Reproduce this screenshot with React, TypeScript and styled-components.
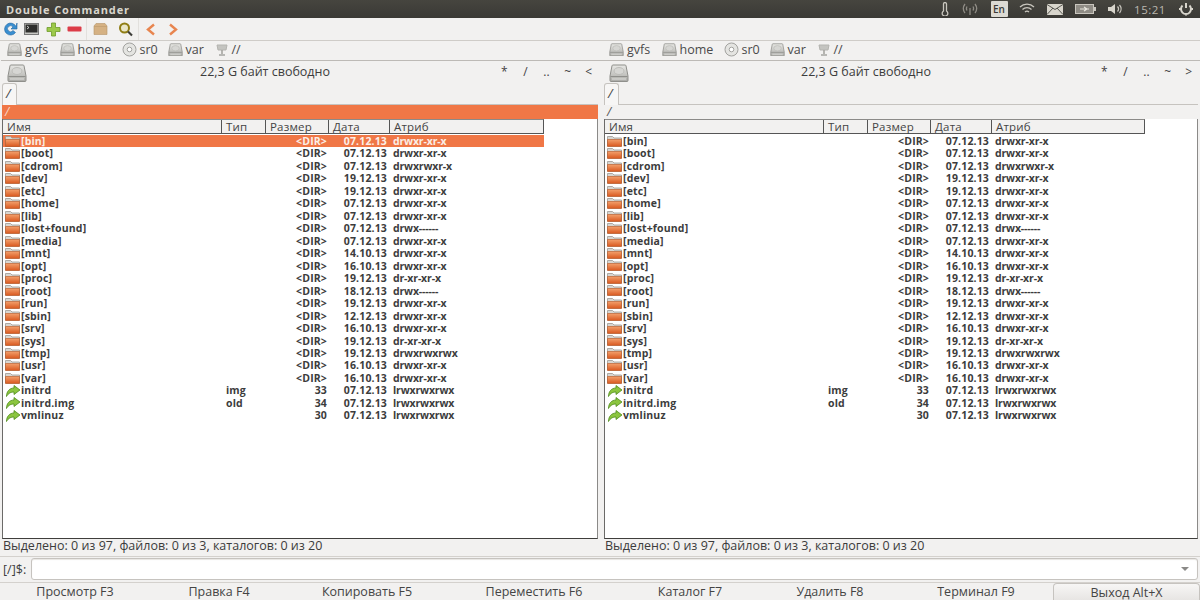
import React from "react";
import styled, { createGlobalStyle } from "styled-components";

const Global = createGlobalStyle`
  html, body { margin: 0; padding: 0; width: 1200px; height: 600px; overflow: hidden; background: #f2f1f0; }
  * { box-sizing: border-box; }
  #root { width: 1200px; height: 600px; }
`;

const Page = styled.div`
  width: 1200px; height: 600px; display: flex; flex-direction: column;
  font-family: "Open Sans", "Noto Sans", "Liberation Sans", sans-serif;
  font-size: 11.5px; color: #3c3c3c; background: #f2f1f0; overflow: hidden;
`;
const TitleBar = styled.div`
  height: 18px; flex: none; display: flex; align-items: center; justify-content: space-between;
  background: linear-gradient(#46453f, #3a3935); padding: 0 4px 0 6px;
`;
const TitleText = styled.div`
  color: #d9d6cd; font-weight: 700; font-size: 11px; letter-spacing: 0.9px;
`;
const Tray = styled.div`
  display: flex; align-items: center; height: 18px; color: #cfccc4;
`;
const TraySlot = styled.span<{ $w: number }>`
  width: ${p => p.$w}px; display: flex; justify-content: center; align-items: center;
`;
const Lang = styled.span`
  width: 17px; height: 16px; background: #dcdad3; color: #3c3b37; font-size: 10px; font-weight: 600;
  display: flex; align-items: center; justify-content: center; border-radius: 1px;
`;
const Clock = styled.span`
  font-size: 11.5px; color: #b9b6ae; letter-spacing: 0.5px;
`;
const Toolbar = styled.div`
  height: 23px; flex: none; display: flex; align-items: center; padding: 0 2px;
  border-bottom: 1px solid #cfccc8;
`;
const ToolIcon = styled.span<{ $w: number }>`
  width: ${p => p.$w}px; height: 18px; flex: none; display: flex; align-items: center; justify-content: center;
`;
const ToolSep = styled.span`
  width: 1px; height: 22px; background: #e2e0dd; margin: 0 1px 0 0; flex: none;
`;
const Panels = styled.div`
  flex: 1; display: grid; grid-template-columns: 602px 598px; min-height: 0;
`;
const Panel = styled.div<{ $right?: boolean }>`
  display: flex; flex-direction: column; padding-left: 2px; min-width: 0;
  padding-right: ${p => (p.$right ? 2 : 4)}px;
`;
const DriveBar = styled.div`
  height: 20px; flex: none; display: flex; align-items: center; margin-left: -1px;
  padding: 0 0 2px 6px; margin-right: -6px; border-bottom: 1px solid #bdbab6; font-size: 12.5px; color: #4a4a4a;
`;
const DriveItem = styled.span<{ $w: number }>`
  width: ${p => p.$w}px; flex: none; display: flex; align-items: center; gap: 3px;
`;
const Head = styled.div`
  height: 22px; flex: none; display: grid; grid-template-columns: 26px 1fr 104px; align-items: center;
`;
const HeadIcon = styled.span`
  padding-left: 5px; display: flex; align-items: center; padding-top: 1px;
`;
const Free = styled.div`
  text-align: center; font-size: 12.5px; color: #3c3c3c; padding-left: 8px; margin-top: -2px;
`;
const Quick = styled.div`
  display: flex; justify-content: space-between; font-size: 12px; color: #444; margin: -2px -1px 0 0;
`;
const QuickItem = styled.span`
  width: 20.5px; text-align: center;
`;
const TabStrip = styled.div`
  height: 22px; flex: none; display: flex; align-items: flex-end; border-bottom: 1px solid #c6c3bf;
`;
const Tab = styled.div`
  width: 15px; height: 22px; margin-bottom: -1px; background: #f7f6f5; border: 1px solid #c6c3bf; border-bottom: none;
  border-radius: 3px 3px 0 0; font-style: italic; font-size: 13px; padding-left: 3px; line-height: 19px; position: relative; color: #444;
`;
const PathBar = styled.div<{ $active?: boolean }>`
  height: 14px; flex: none; line-height: 13px; font-size: 12px; padding-left: 3px; font-style: italic;
  background: ${p => (p.$active ? "#f07746" : "#f2f1f0")};
  color: ${p => (p.$active ? "#f9d8c8" : "#555")};
`;
const ListBox = styled.div`
  flex: 1; min-height: 0; background: #fff; border: 1px solid #6b6a68; border-top: none; border-right-color: #8b8a88;
  border-bottom-color: #3f3e3c; position: relative; overflow: hidden;
`;
const ColHead = styled.div<{ $right?: boolean }>`
  display: grid; grid-template-columns: 219px 44px 63px 61px 154px; width: ${p => (p.$right ? 540 : 541)}px; height: 15px; background: #f2f1f0;
  border-top: 1px solid #8b8a88; border-bottom: 1px solid #555; border-right: 1px solid #555;
  font-size: 11.5px; line-height: 14px; color: #444; letter-spacing: 0.2px;
`;
const ColCell = styled.div`
  padding-left: 4px; border-right: 1px solid #555;
  &:last-child { border-right: none; }
`;
const RowList = styled.div`
  padding-top: 1px;
`;
const Row = styled.div<{ $sel?: boolean }>`
  display: grid; grid-template-columns: 18px 201px 44px 63px 61px 154px; width: 541px; height: 12.47px;
  line-height: 12.5px; font-weight: 700; font-size: 10.5px; white-space: nowrap;
  background: ${p => (p.$sel ? "#f07746" : "transparent")};
  color: ${p => (p.$sel ? "#fbeee7" : "#3c3c3c")};
  letter-spacing: 0.15px;
`;
const IconCell = styled.span`
  display: flex; align-items: center; padding-left: 2px; height: 12.5px;
`;
const TypeCell = styled.span`
  padding-left: 4px;
`;
const SizeCell = styled.span`
  text-align: right; padding-right: 2px;
`;
const DateCell = styled.span`
  text-align: right; padding-right: 3px;
`;
const AttrCell = styled.span`
  padding-left: 3px; letter-spacing: -0.15px;
`;
const Status = styled.div`
  height: 17px; flex: none; font-size: 12.5px; line-height: 14px; padding-left: 1px; color: #3c3c3c;
`;
const CmdRow = styled.div`
  height: 26px; flex: none; display: flex; align-items: center; padding: 0 2px 1px 3px; gap: 5px;
  border-top: 1px solid #d4d1cd; font-size: 12.5px;
`;
const CmdInput = styled.div`
  flex: 1; height: 22px; background: #fff; border: 1px solid #c6c3bf; border-radius: 3px; display: flex;
  justify-content: flex-end; align-items: center; padding-right: 8px; box-shadow: inset 0 1px 1px #e8e6e3;
`;
const Arrow = styled.span`
  width: 0; height: 0; border-left: 4px solid transparent; border-right: 4px solid transparent; border-top: 4px solid #8a8987;
`;
const FnBar = styled.div`
  height: 18px; flex: none; display: grid; grid-template-columns: 150px 138px 158px 176px 136px 144px 148px 150px;
  border-top: 1px solid #d4d1cd; font-size: 12.5px; color: #444;
`;
const FnBtn = styled.div<{ $raised?: boolean }>`
  text-align: center; line-height: 18px;
  ${p => p.$raised ? "background: linear-gradient(#f7f6f5,#e6e4e2); border: 1px solid #c6c3bf; border-bottom: none; border-radius: 4px 4px 0 0; margin-left: 3px; line-height: 17px;" : ""}
`;

const Disk = ({ size = 14 }: { size?: number }) => (
  <svg width={size} height={size * 0.9} viewBox="0 0 20 18">
    <defs><linearGradient id="dk" x1="0" y1="0" x2="0" y2="1"><stop offset="0" stopColor="#e8e8e5" /><stop offset="1" stopColor="#aaaaa6" /></linearGradient></defs>
    <path d="M4 1h12a1 1 0 0 1 1 .8l2 10.200v4.500a1 1 0 0 1-1 1H2a1 1 0 0 1-1-1V12l2-10.200a1 1 0 0 1 1-.8z" fill="url(#dk)" stroke="#8f8f8b" />
    <path d="M1.500 12.500h17" stroke="#8f8f8b" />
    <ellipse cx="10" cy="7" rx="5" ry="3.500" fill="#d6d6d3" stroke="#bdbdb9" />
    <path d="M3 15h14" stroke="#dededb" />
  </svg>
);
const Cd = () => (
  <svg width="15" height="15" viewBox="0 0 15 15">
    <circle cx="7.500" cy="7.500" r="6.500" fill="#e4e4e1" stroke="#a3a3a0" />
    <circle cx="7.500" cy="7.500" r="2.300" fill="#fff" stroke="#a3a3a0" />
  </svg>
);
const Net = () => (
  <svg width="14" height="14" viewBox="0 0 14 14">
    <path d="M2 2h10l-1 5H3z" fill="#c4c4c0" stroke="#b4b4b0" />
    <path d="M7 7v4M4 12h6" stroke="#a5a5a1" strokeWidth="1.600" />
  </svg>
);
const Folder = () => (
  <svg width="15" height="11" viewBox="0 0 15 11">
    <defs><linearGradient id="fo" x1="0" y1="0" x2="0" y2="1"><stop offset="0" stopColor="#f3a06c" /><stop offset="1" stopColor="#d9581f" /></linearGradient></defs>
    <path d="M.5 .5h5l1.500 1.500H14.500V10H.5z" fill="#d8d6d1" stroke="#9a9893" strokeWidth=".8" />
    <path d="M.5 3.500h14v7H.5z" fill="url(#fo)" stroke="#b5521f" strokeWidth=".6" />
  </svg>
);
const Link = () => (
  <svg width="16" height="12" viewBox="0 0 16 12">
    <path d="M9 0.500l6 4.500-6 4.500V7C6 7 3.500 8 1.500 11.500 1.500 6.500 4.500 3 9 3z" fill="#8bc53f" stroke="#4e8a1b" strokeWidth=".8" />
  </svg>
);

const Refresh = () => (
  <svg width="15" height="16" viewBox="0 0 15 16">
    <path d="M13 5.500A6 6 0 1 0 12.500 11.500L10 9.500A3 3 0 1 1 10 6L8 8h6V2z" fill="#3a8fd1" stroke="#23679f" strokeWidth=".6" />
  </svg>
);
const Term = () => (
  <svg width="15" height="12" viewBox="0 0 15 12">
    <rect x=".5" y=".5" width="14" height="11" fill="#c8c8c4" stroke="#777" />
    <rect x="1.500" y="1.500" width="12" height="8" fill="#2e2e2c" />
    <path d="M3 3l2 1.500L3 6" stroke="#eee" fill="none" strokeWidth=".8" />
  </svg>
);
const Plus = () => (
  <svg width="15" height="15" viewBox="0 0 15 15">
    <path d="M5.500 1h4v4.500H14v4H9.500V14h-4V9.500H1v-4h4.500z" fill="#9cc94a" stroke="#6d9a2a" strokeWidth=".8" />
  </svg>
);
const Minus = () => (
  <svg width="15" height="6" viewBox="0 0 15 6">
    <rect x=".5" y=".5" width="14" height="5" rx="1" fill="#dc3c48" />
  </svg>
);
const Box = () => (
  <svg width="15" height="12" viewBox="0 0 15 12">
    <path d="M1 3l2-2.500h9L14 3v8.500H1z" fill="#d5b183" stroke="#b59467" strokeWidth=".6" />
    <path d="M1 3.500h13" stroke="#c09e70" strokeWidth=".7" />
  </svg>
);
const Search = () => (
  <svg width="15" height="15" viewBox="0 0 15 15">
    <circle cx="6.500" cy="6" r="4.500" fill="#e9e6c9" stroke="#8f7d14" strokeWidth="2" />
    <path d="M10 9.500l4 4" stroke="#3e3e3a" strokeWidth="2.200" />
  </svg>
);
const Chevron = ({ right }: { right?: boolean }) => (
  <svg width="10" height="13" viewBox="0 0 10 13">
    <path d={right ? "M2 1.500L8 6.500 2 11.500" : "M8 1.500L2 6.500 8 11.500"} fill="none" stroke="#e8854f" strokeWidth="2.400" />
  </svg>
);
const TrayLine = ({ d, w = 16, color = "#c9c6be", sw = 1.3 }: { d: string; w?: number; color?: string; sw?: number }) => (
  <svg width={w} height="14" viewBox={`0 0 ${w} 14`}><path d={d} fill="none" stroke={color} strokeWidth={sw} /></svg>
);
const Mail = () => (
  <svg width="16" height="11" viewBox="0 0 16 11">
    <rect width="16" height="11" fill="#d8d5cc" />
    <path d="M0 .5l8 5 8-5M0 10.500l6-6.500M16 10.500l-6-6.500" fill="none" stroke="#4a4944" strokeWidth=".9" />
  </svg>
);
const Battery = () => (
  <svg width="22" height="10" viewBox="0 0 22 10">
    <rect x=".5" y=".5" width="18" height="9" fill="#8f8c85" stroke="#c9c6be" />
    <rect x="19" y="3" width="2" height="4" fill="#c9c6be" />
    <path d="M5 5h9M9 3l3 2-3 2" stroke="#e8e6de" strokeWidth="1.100" fill="none" />
  </svg>
);
const Speaker = () => (
  <svg width="17" height="14" viewBox="0 0 17 14">
    <path d="M1 5h3l4-3v10L4 9H1z" fill="#d8d5cc" />
    <path d="M10.500 4.500a3.500 3.500 0 0 1 0 5M12.500 3a6 6 0 0 1 0 8" fill="none" stroke="#c9c6be" strokeWidth="1.300" />
  </svg>
);

const rows: [string, string, string, string, string, string][] = [
  ["d", "[bin]", "", "<DIR>", "07.12.13", "drwxr-xr-x"],
  ["d", "[boot]", "", "<DIR>", "07.12.13", "drwxr-xr-x"],
  ["d", "[cdrom]", "", "<DIR>", "07.12.13", "drwxrwxr-x"],
  ["d", "[dev]", "", "<DIR>", "19.12.13", "drwxr-xr-x"],
  ["d", "[etc]", "", "<DIR>", "19.12.13", "drwxr-xr-x"],
  ["d", "[home]", "", "<DIR>", "07.12.13", "drwxr-xr-x"],
  ["d", "[lib]", "", "<DIR>", "07.12.13", "drwxr-xr-x"],
  ["d", "[lost+found]", "", "<DIR>", "07.12.13", "drwx------"],
  ["d", "[media]", "", "<DIR>", "07.12.13", "drwxr-xr-x"],
  ["d", "[mnt]", "", "<DIR>", "14.10.13", "drwxr-xr-x"],
  ["d", "[opt]", "", "<DIR>", "16.10.13", "drwxr-xr-x"],
  ["d", "[proc]", "", "<DIR>", "19.12.13", "dr-xr-xr-x"],
  ["d", "[root]", "", "<DIR>", "18.12.13", "drwx------"],
  ["d", "[run]", "", "<DIR>", "19.12.13", "drwxr-xr-x"],
  ["d", "[sbin]", "", "<DIR>", "12.12.13", "drwxr-xr-x"],
  ["d", "[srv]", "", "<DIR>", "16.10.13", "drwxr-xr-x"],
  ["d", "[sys]", "", "<DIR>", "19.12.13", "dr-xr-xr-x"],
  ["d", "[tmp]", "", "<DIR>", "19.12.13", "drwxrwxrwx"],
  ["d", "[usr]", "", "<DIR>", "16.10.13", "drwxr-xr-x"],
  ["d", "[var]", "", "<DIR>", "16.10.13", "drwxr-xr-x"],
  ["l", "initrd", "img", "33", "07.12.13", "lrwxrwxrwx"],
  ["l", "initrd.img", "old", "34", "07.12.13", "lrwxrwxrwx"],
  ["l", "vmlinuz", "", "30", "07.12.13", "lrwxrwxrwx"],
];

const Drives = () => (
  <DriveBar>
    <DriveItem $w={52.5}><Disk size={15} />gvfs</DriveItem>
    <DriveItem $w={62}><Disk size={15} />home</DriveItem>
    <DriveItem $w={46}><Cd />sr0</DriveItem>
    <DriveItem $w={47}><Disk size={15} />var</DriveItem>
    <DriveItem $w={40}><Net />//</DriveItem>
  </DriveBar>
);

const FilePanel = ({ active, right }: { active?: boolean; right?: boolean }) => (
  <Panel $right={right}>
    <Drives />
    <Head>
      <HeadIcon><Disk size={20} /></HeadIcon>
      <Free>22,3 G байт свободно</Free>
      <Quick>
        <QuickItem>*</QuickItem><QuickItem>/</QuickItem><QuickItem>..</QuickItem><QuickItem>~</QuickItem><QuickItem>{right ? ">" : "<"}</QuickItem>
      </Quick>
    </Head>
    <TabStrip><Tab>/</Tab></TabStrip>
    <PathBar $active={active}>/</PathBar>
    <ListBox>
      <ColHead $right={right}>
        <ColCell>Имя</ColCell><ColCell>Тип</ColCell><ColCell>Размер</ColCell><ColCell>Дата</ColCell><ColCell>Атриб</ColCell>
      </ColHead>
      <RowList>
        {rows.map((r, i) => (
          <Row key={r[1]} $sel={active && i === 0}>
            <IconCell>{r[0] === "d" ? <Folder /> : <Link />}</IconCell>
            <span>{r[1]}</span>
            <TypeCell>{r[2]}</TypeCell>
            <SizeCell>{r[3]}</SizeCell>
            <DateCell>{r[4]}</DateCell>
            <AttrCell>{r[5]}</AttrCell>
          </Row>
        ))}
      </RowList>
    </ListBox>
    <Status>Выделено: 0 из 97, файлов: 0 из 3, каталогов: 0 из 20</Status>
  </Panel>
);

export default function App() {
  return (
    <Page>
      <Global />
      <TitleBar>
        <TitleText>Double Commander</TitleText>
        <Tray>
          <TraySlot $w={14}><TrayLine w={10} d="M3.500 9V2a1.500 1.500 0 0 1 3 0v7a2.800 2.800 0 1 1-3 0z" /></TraySlot>
          <TraySlot $w={36}><TrayLine color="#8f8c85" d="M8 6v7M5 4.500a4 4 0 0 0 0 4M11 4.500a4 4 0 0 1 0 4M3 2a7.500 7.500 0 0 0 0 9M13 2a7.500 7.500 0 0 1 0 9" /></TraySlot>
          <TraySlot $w={22}><Lang>En</Lang></TraySlot>
          <TraySlot $w={34}><TrayLine d="M1 5a10 10 0 0 1 14 0M3.500 7.500a6.500 6.500 0 0 1 9 0M6 10a3 3 0 0 1 4 0" /></TraySlot>
          <TraySlot $w={22}><Mail /></TraySlot>
          <TraySlot $w={40}><Battery /></TraySlot>
          <TraySlot $w={18}><Speaker /></TraySlot>
          <TraySlot $w={52}><Clock>15:21</Clock></TraySlot>
          <TraySlot $w={20}><TrayLine sw={2} color="#d8d5cc" d="M8 1v5M4.500 3.500a5 5 0 1 0 7 0M1 7H3M13 7h2M8 12.500v1" /></TraySlot>
        </Tray>
      </TitleBar>
      <Toolbar>
        <ToolIcon $w={16}><Refresh /></ToolIcon>
        <ToolIcon $w={26}><Term /></ToolIcon>
        <ToolIcon $w={18}><Plus /></ToolIcon>
        <ToolIcon $w={24}><Minus /></ToolIcon>
        <ToolSep />
        <ToolIcon $w={24}><Box /></ToolIcon>
        <ToolIcon $w={26}><Search /></ToolIcon>
        <ToolSep />
        <ToolIcon $w={22}><Chevron /></ToolIcon>
        <ToolIcon $w={22}><Chevron right /></ToolIcon>
      </Toolbar>
      <Panels>
        <FilePanel active />
        <FilePanel right />
      </Panels>
      <CmdRow>
        <span>[/]$:</span>
        <CmdInput><Arrow /></CmdInput>
      </CmdRow>
      <FnBar>
        <FnBtn>Просмотр F3</FnBtn>
        <FnBtn>Правка F4</FnBtn>
        <FnBtn>Копировать F5</FnBtn>
        <FnBtn>Переместить F6</FnBtn>
        <FnBtn>Каталог F7</FnBtn>
        <FnBtn>Удалить F8</FnBtn>
        <FnBtn>Терминал F9</FnBtn>
        <FnBtn $raised>Выход Alt+X</FnBtn>
      </FnBar>
    </Page>
  );
}
